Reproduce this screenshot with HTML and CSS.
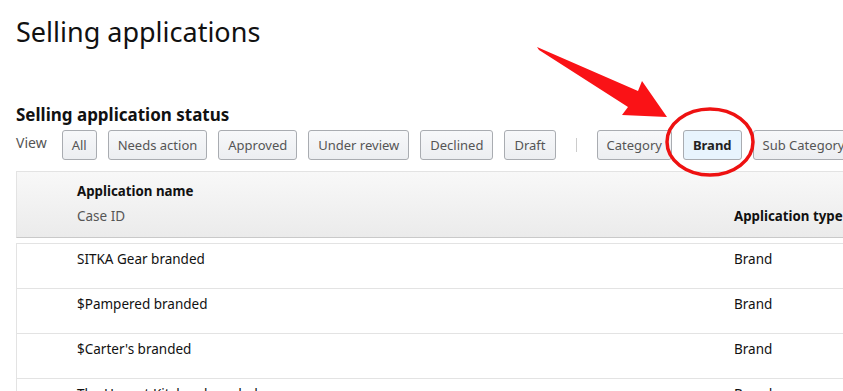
FILE: index.html
```html
<!DOCTYPE html>
<html lang="en">
<head>
  <meta charset="UTF-8" />
  <meta name="viewport" content="width=device-width, initial-scale=1.0"/>
  <title>Selling applications</title>
  <link rel="stylesheet" href="styles.css">
</head>
<body>

  <div class="page">
    <h1>Selling applications</h1>

    <h2>Selling application status</h2>

    <div class="view-row">
      <span class="view-label">View</span>
      <button class="pill">All</button>
      <button class="pill">Needs action</button>
      <button class="pill">Approved</button>
      <button class="pill">Under review</button>
      <button class="pill">Declined</button>
      <button class="pill">Draft</button>
      <span class="divider"></span>
      <button class="pill">Category</button>
      <button class="pill active">Brand</button>
      <button class="pill">Sub Category</button>
    </div>

    <div class="table">
      <div class="thead">
        <div class="col-name">
          <div class="th-strong">Application name</div>
          <div class="th-sub">Case ID</div>
        </div>
        <div class="col-type">
          <div class="th-strong">Application type</div>
        </div>
      </div>
      <div class="row">
        <div class="col-name">SITKA Gear branded</div>
        <div class="col-type">Brand</div>
      </div>
      <div class="row">
        <div class="col-name">$Pampered branded</div>
        <div class="col-type">Brand</div>
      </div>
      <div class="row">
        <div class="col-name">$Carter's branded</div>
        <div class="col-type">Brand</div>
      </div>
      <div class="row">
        <div class="col-name">The Honest Kitchen branded</div>
        <div class="col-type">Brand</div>
      </div>
    </div>
  </div>

  <!-- red annotation drawn over the screenshot -->
  <svg class="markup" width="843" height="391" viewBox="0 0 843 391">
    <polygon points="537,47 638,91 642,81 667,117 622,115 628,107 539,50" fill="#fa1216"/>
    <ellipse cx="710" cy="142" rx="43" ry="33" fill="none" stroke="#ee1111" stroke-width="3.5"/>
  </svg>

</body>
</html>
```

FILE: styles.css
```css
html, body {
  margin: 0;
  overflow: hidden;
}

body {
  font-family: 'Noto Sans', 'Open Sans', sans-serif;
  color: #111;
  background: #fff;
  position: relative;
  width: 843px;
  height: 391px;
}

.page {
  padding: 0 0 0 16px;
  width: 1000px;
}

h1 {
  font-size: 27px;
  font-weight: 400;
  line-height: 34px;
  margin: 0;
  padding-top: 15px;
  color: #111;
}

h2 {
  font-size: 17px;
  font-weight: 700;
  line-height: 22px;
  margin: 55px 0 0;
  color: #111;
}

.view-row {
  display: flex;
  align-items: center;
  gap: 11px;
  margin-top: 4px;
  height: 30px;
}

.view-label {
  font-size: 14px;
  color: #555;
  margin-right: 4px;
  align-self: flex-start;
  line-height: 26px;
}

.pill {
  height: 30px;
  padding: 0 9px;
  font-family: inherit;
  font-size: 13px;
  color: #555;
  background: linear-gradient(to bottom, #f7f8fa, #eceef1);
  border: 1px solid #a9acb1;
  border-radius: 3px;
  white-space: nowrap;
}

.pill.active {
  background: #e8f4fd;
  color: #222;
  font-weight: 700;
}

.divider {
  width: 1px;
  height: 14px;
  background: #ccc;
  margin: 0 9px;
}

.table {
  margin-top: 11px;
  width: 1000px;
}

.thead {
  display: flex;
  height: 65px;
  background: linear-gradient(to bottom, #f8f8f8, #ebebeb);
  border-top: 1px solid #e3e3e3;
  border-left: 1px solid #e3e3e3;
  border-bottom: 1px solid #c9c9c9;
  margin-bottom: 5px;
}

.thead .col-name {
  padding-top: 9px;
}

.thead .col-type {
  display: flex;
  align-items: flex-end;
  padding-bottom: 11px;
}

.th-strong {
  font-size: 13.3px;
  font-weight: 700;
  line-height: 20px;
  color: #111;
}

.th-sub {
  font-size: 13.5px;
  color: #555;
  line-height: 20px;
  margin-top: 5px;
}

.col-name {
  box-sizing: border-box;
  width: 717px;
  padding-left: 60px;
  flex-shrink: 0;
}

.col-type {
  flex: 1;
}

.row {
  display: flex;
  height: 44px;
  border-top: 1px solid #e3e3e3;
  border-left: 1px solid #e3e3e3;
  font-size: 13.5px;
  line-height: 20px;
  color: #111;
}

.row .col-name,
.row .col-type {
  padding-top: 5px;
}

.markup {
  position: absolute;
  left: 0;
  top: 0;
  pointer-events: none;
}
```
